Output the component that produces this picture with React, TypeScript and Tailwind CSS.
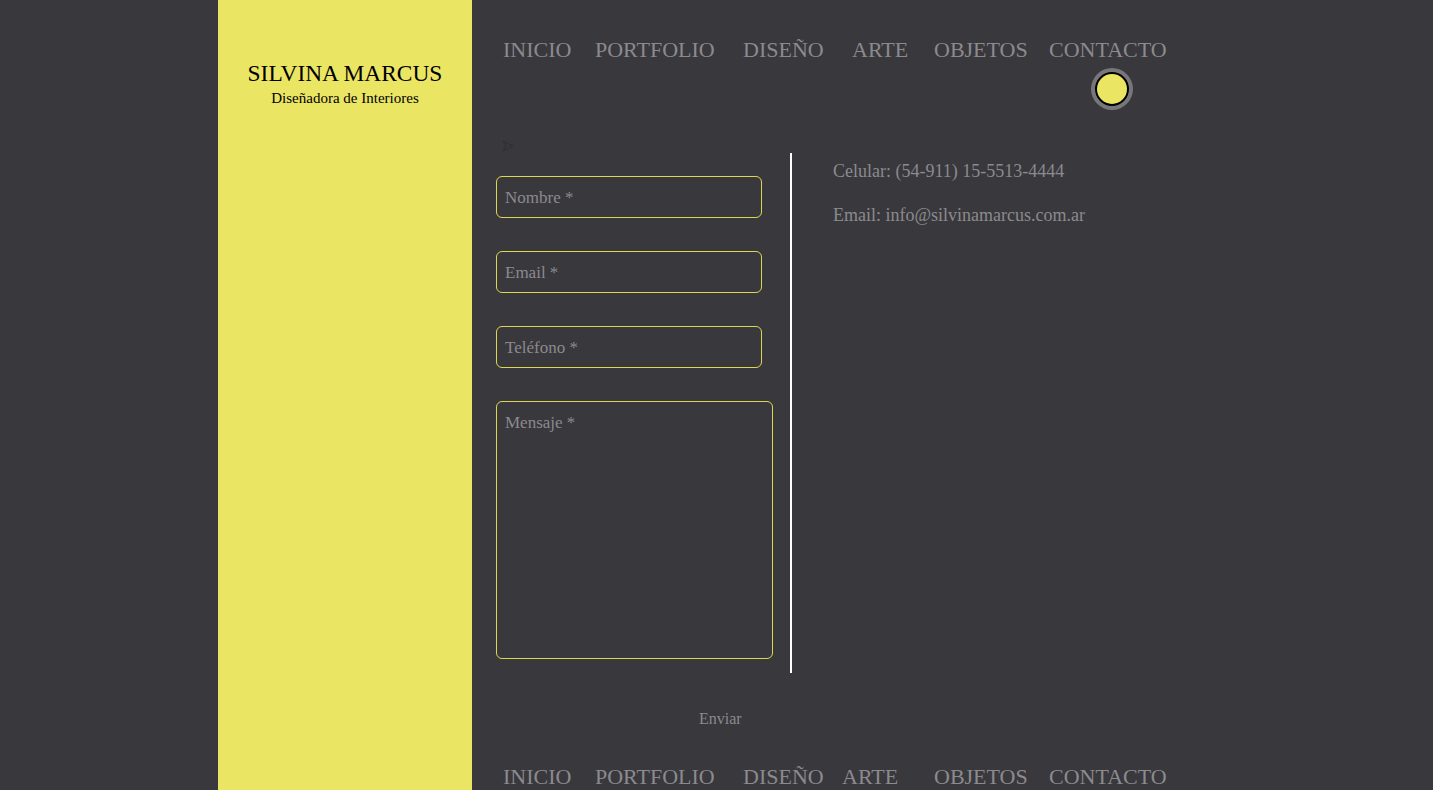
import React from 'react';

const serif = "font-['Liberation_Serif','Times_New_Roman',serif]";

type NavItem = { label: string; width: string };

const topNav: NavItem[] = [
  { label: 'INICIO', width: 'w-[92px]' },
  { label: 'PORTFOLIO', width: 'w-[148px]' },
  { label: 'DISEÑO', width: 'w-[109px]' },
  { label: 'ARTE', width: 'w-[82px]' },
  { label: 'OBJETOS', width: 'w-[115px]' },
  { label: 'CONTACTO', width: 'w-[130px]' },
];

const bottomNav: NavItem[] = [
  { label: 'INICIO', width: 'w-[92px]' },
  { label: 'PORTFOLIO', width: 'w-[148px]' },
  { label: 'DISEÑO', width: 'w-[99px]' },
  { label: 'ARTE', width: 'w-[92px]' },
  { label: 'OBJETOS', width: 'w-[115px]' },
  { label: 'CONTACTO', width: 'w-[130px]' },
];

const Nav = ({ items, active }: { items: NavItem[]; active?: string }) => (
  <ul className="flex pl-[7px]">
    {items.map((item) => (
      <li key={item.label} className={`${item.width} shrink-0`}>
        <a className="block text-[22px] leading-[26px] text-[#8b8a8e] whitespace-nowrap">{item.label}</a>
        {active === item.label && (
          <div className="mt-[5px] ml-[42px] w-[42px] h-[42px] rounded-full bg-[#77767b] flex items-center justify-center">
            <div className="w-[34px] h-[34px] rounded-full bg-black flex items-center justify-center">
              <div className="w-[30px] h-[30px] rounded-full bg-[#ebe564]" />
            </div>
          </div>
        )}
      </li>
    ))}
  </ul>
);

const Field = ({ placeholder }: { placeholder: string }) => (
  <input
    type="text"
    placeholder={placeholder}
    className="block w-[266px] h-[42px] px-[8px] pt-[2px] rounded-[6px] border border-[#ddd74f] bg-transparent text-[17px] text-[#8b8a8e] placeholder:text-[#8b8a8e] outline-none"
  />
);

export default function App() {
  return (
    <div className={`min-h-screen bg-[#39383d] ${serif}`}>
      <div className="mx-auto w-[997px] flex min-h-[830px]">
        {/* sidebar */}
        <aside className="w-[254px] shrink-0 bg-[#ebe564] text-center text-black pt-[60px]">
          <h1 className="text-[23.4px] leading-[26px]">SILVINA MARCUS</h1>
          <p className="text-[15px] leading-[18px] mt-[3px]">Diseñadora de Interiores</p>
        </aside>

        <main className="flex-1 pl-[24px]">
          <nav className="pt-[37px]">
            <Nav items={topNav} active="CONTACTO" />
          </nav>

          <div className="flex mt-[26px]">
            {/* form */}
            <form className="w-[294px] shrink-0" onSubmit={(e) => e.preventDefault()}>
              <div className="h-[20px] pl-[6px] pt-[4px]">
                <svg width="12" height="12" viewBox="0 0 12 12" fill="none">
                  <path d="M1 1 L11 6 L1 11 L4 6 Z" stroke="#2f2e33" strokeWidth="1" />
                </svg>
              </div>
              <div className="mt-[20px] flex flex-col gap-[33px]">
                <Field placeholder="Nombre *" />
                <Field placeholder="Email *" />
                <Field placeholder="Teléfono *" />
                <textarea
                  placeholder="Mensaje *"
                  className="block w-[277px] h-[258px] px-[8px] pt-[11px] rounded-[6px] border border-[#ddd74f] bg-transparent text-[17px] leading-[20px] text-[#8b8a8e] placeholder:text-[#8b8a8e] outline-none resize-none"
                />
              </div>
            </form>

            <div className="w-[2px] h-[520px] mt-[17px] bg-white" />

            {/* contact info */}
            <div className="pl-[41px] pt-[25px] text-[18px] leading-[20px] text-[#8b8a8e]">
              <p>Celular: (54-911) 15-5513-4444</p>
              <p className="mt-[24px]">Email: info@silvinamarcus.com.ar</p>
            </div>
          </div>

          <button className="block mt-[36px] ml-[203px] text-[16px] leading-[20px] text-[#8b8a8e]">Enviar</button>

          <footer className="mt-[35px]">
            <Nav items={bottomNav} />
          </footer>
        </main>
      </div>
    </div>
  );
}
